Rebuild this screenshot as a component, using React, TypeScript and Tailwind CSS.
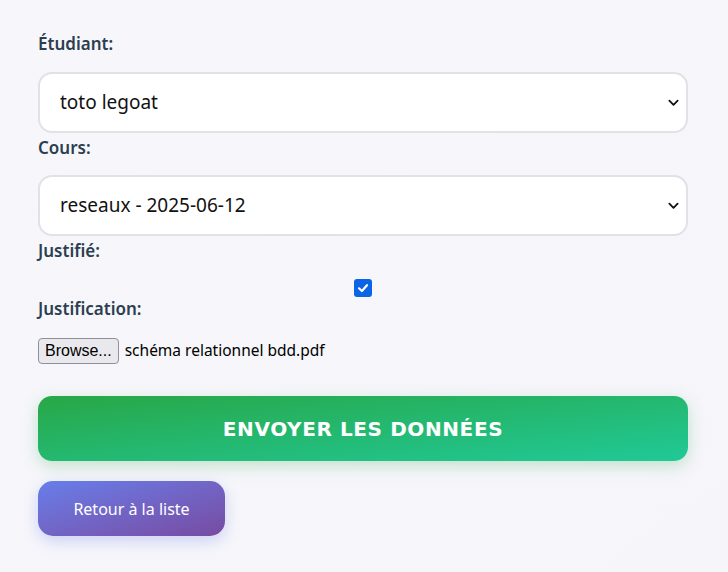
import React from 'react';

const labelCls = "block text-[17px] font-semibold text-[#2c3e50] leading-6";

const SelectBox: React.FC<{ value: string }> = ({ value }) => (
  <div className="relative">
    <select
      defaultValue={value}
      className="w-full h-[61px] appearance-none bg-white border-2 border-[#e1e1e8] rounded-[14px] pl-[20px] pr-10 text-[19px] text-[#111] outline-none"
    >
      <option>{value}</option>
    </select>
    {/* dropdown chevron */}
    <svg viewBox="0 0 12 8" className="w-[11px] h-[8px] absolute right-[9px] top-1/2 -translate-y-1/2 pointer-events-none">
      <path d="M1.5 1.5 L6 6 L10.5 1.5" fill="none" stroke="#111" strokeWidth="2" strokeLinecap="round" strokeLinejoin="round" />
    </svg>
  </div>
);

export default function App() {
  return (
    <div
      className="min-h-[572px] w-full bg-gradient-to-br from-[#f7f7fb] to-[#f6f5fa] pl-[38px] pr-[40px] pt-[32px]"
      style={{ fontFamily: '"Noto Sans", "Open Sans", sans-serif' }}
    >
      <form className="flex flex-col" onSubmit={(e) => e.preventDefault()}>
        <label className={labelCls}>Étudiant:</label>
        <div className="mt-[16px]">
          <SelectBox value="toto legoat" />
        </div>

        <label className={labelCls + " mt-[3px]"}>Cours:</label>
        <div className="mt-[15px]">
          <SelectBox value="reseaux - 2025-06-12" />
        </div>

        <label className={labelCls + " mt-[3px]"}>Justifié:</label>
        <div className="flex justify-center mt-[16px]">
          <span className="w-[18px] h-[18px] rounded-[3px] bg-[#0b63e5] flex items-center justify-center">
            <svg viewBox="0 0 12 12" className="w-[12px] h-[12px]">
              <path d="M2 6.3 L4.9 9 L10 3.2" fill="none" stroke="white" strokeWidth="2.2" strokeLinecap="round" strokeLinejoin="round" />
            </svg>
          </span>
        </div>

        <label className={labelCls}>Justification:</label>
        <div className="flex items-center gap-[6px] mt-[17px]">
          <button
            type="button"
            className="h-[26px] px-[6px] bg-[#e9e9ed] border border-[#8f8f9d] rounded-[4px] text-[16px] text-black leading-none"
            style={{ fontFamily: '"Liberation Sans", sans-serif' }}
          >
            Browse...
          </button>
          <span className="text-[15.5px] text-black">schéma relationnel bdd.pdf</span>
        </div>

        <button
          type="submit"
          className="mt-[32px] h-[65px] w-full rounded-[14px] bg-gradient-to-br from-[#28a745] to-[#20c997] text-white text-[20px] font-bold tracking-[0.6px] uppercase shadow-[0_5px_16px_rgba(40,167,69,0.25)]"
          style={{ fontFamily: '"DejaVu Sans", Verdana, sans-serif' }}
        >
          Envoyer les données
        </button>

        <div className="mt-[20px]">
          <button
            type="button"
            className="h-[55px] w-[187px] rounded-[15px] bg-gradient-to-br from-[#667eea] to-[#764ba2] text-white text-[16px] shadow-[0_5px_15px_rgba(102,126,234,0.3)]"
          >
            Retour à la liste
          </button>
        </div>
      </form>
    </div>
  );
}
